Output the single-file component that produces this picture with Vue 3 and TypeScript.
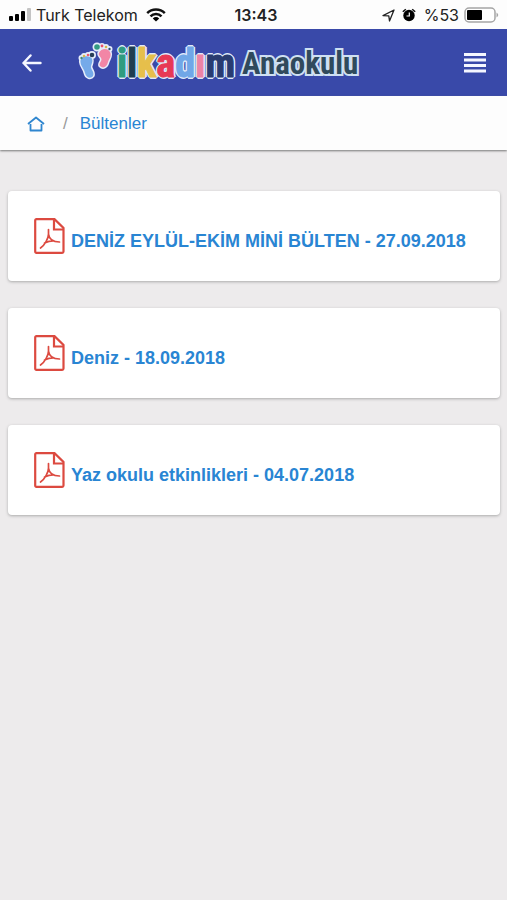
<script setup lang="ts">
interface Bulletin {
  title: string
  date: string
}

interface LogoLetter {
  char: string
  tone: string
}

const bulletins: Bulletin[] = [
  { title: 'DENİZ EYLÜL-EKİM MİNİ BÜLTEN', date: '27.09.2018' },
  { title: 'Deniz', date: '18.09.2018' },
  { title: 'Yaz okulu etkinlikleri', date: '04.07.2018' },
]

const letters: LogoLetter[] = [
  { char: 'i', tone: 'green' },
  { char: 'l', tone: 'dark' },
  { char: 'k', tone: 'yellow' },
  { char: 'a', tone: 'red' },
  { char: 'd', tone: 'sky' },
  { char: 'ı', tone: 'pink' },
  { char: 'm', tone: 'navy' },
]
</script>

<template>
  <div class="app">
    <div class="status">
      <div class="status-side">
        <svg class="signal" width="23" height="14" viewBox="0 0 23 14" aria-hidden="true">
          <rect x="0" y="8" width="4" height="5" rx="1" />
          <rect x="6" y="6" width="4" height="7" rx="1" />
          <rect x="12" y="3" width="4" height="10" rx="1" />
          <rect x="18" y="0" width="4" height="13" rx="1" fill="#c4c4c4" />
        </svg>
        <span class="carrier">Turk Telekom</span>
        <svg class="wifi" width="20" height="14" viewBox="0 0 20 14" aria-hidden="true">
          <g fill="none" stroke="#111" stroke-width="2.5">
            <path d="M1.2 5.2C6 .4 14 .4 18.800 5.200" />
            <path d="M4.500 8.400C7.500 5.300 12.500 5.300 15.500 8.400" />
          </g>
          <path d="M6.800 10.400C8.700 8.600 11.300 8.600 13.200 10.400L10 13.600Z" />
        </svg>
      </div>
      <span class="clock">13:43</span>
      <div class="status-side status-end">
        <svg width="13" height="13" viewBox="0 0 13 13" aria-hidden="true">
          <path d="M1 6.600L12 1L7.500 12L6.800 6.800Z" fill="none" stroke="#222" stroke-width="1.300" stroke-linejoin="round" />
        </svg>
        <svg class="alarm" width="14" height="14" viewBox="0 0 14 14" aria-hidden="true">
          <circle cx="7" cy="7.500" r="5.700" />
          <path d="M.8 3.800L3.800 1.200M13.200 3.800L10.200 1.200" stroke="#111" stroke-width="1.500" />
          <path d="M7.300 4.500V8H4.500" fill="none" stroke="#fff" stroke-width="1.200" />
        </svg>
        <span class="percent">%53</span>
        <svg width="35" height="16" viewBox="0 0 35 16" aria-hidden="true">
          <rect x="1" y="1" width="30" height="14" rx="4" fill="#fff" stroke="#a5a5a5" stroke-width="1.500" />
          <rect x="3" y="3" width="15" height="10" rx="1" />
          <path d="M32.500 5.500Q36 8 32.500 10.500Z" fill="#a5a5a5" />
        </svg>
      </div>
    </div>

    <header class="bar">
      <button class="icon-button" type="button" aria-label="Geri">
        <svg width="20" height="18" viewBox="0 0 20 18" fill="none" stroke="#f5f7ff" stroke-width="2.400" stroke-linecap="round" stroke-linejoin="round">
          <path d="M18.500 9H1.500M8.500 1.500L1.500 9L8.500 16.500" />
        </svg>
      </button>
      <div class="logo">
        <svg class="feet" width="35" height="38" viewBox="0 0 35 38" aria-hidden="true">
          <g stroke="#e6edfb" stroke-width="3" stroke-linejoin="round">
            <path d="M2.500 20C2 15 8 13 12 15C16 17 14 21 13 24C12 27 17 30 15 34C13 37 8 36 7 31C6 26 3 25 2.500 20Z" />
            <circle cx="14" cy="13" r="2.500" /><circle cx="10" cy="13" r="1.500" /><circle cx="6" cy="14" r="1.500" /><circle cx="3.500" cy="16" r="1.500" />
            <path d="M21 11C23 6 30 6 32 10C34 14 31 17 30 20C29 25 25 27 22 24C20 21 25 19 23 16C22 14 20 13 21 11Z" />
            <circle cx="19" cy="5" r="3" /><circle cx="24" cy="4" r="1.500" /><circle cx="28" cy="5" r="1.500" /><circle cx="31.500" cy="7" r="1.500" />
          </g>
          <path d="M2.500 20C2 15 8 13 12 15C16 17 14 21 13 24C12 27 17 30 15 34C13 37 8 36 7 31C6 26 3 25 2.500 20Z" fill="#75aae9" />
          <circle cx="14" cy="13" r="2.300" fill="#263d57" /><circle cx="10" cy="13" r="1.300" fill="#e95770" /><circle cx="6" cy="14" r="1.300" fill="#d6b84d" /><circle cx="3.500" cy="16" r="1.200" fill="#438877" />
          <path d="M21 11C23 6 30 6 32 10C34 14 31 17 30 20C29 25 25 27 22 24C20 21 25 19 23 16C22 14 20 13 21 11Z" fill="#f286a6" />
          <circle cx="19" cy="5" r="2.800" fill="#349c82" /><circle cx="24" cy="4" r="1.400" fill="#e9526b" /><circle cx="28" cy="5" r="1.300" fill="#d6b84d" /><circle cx="31.500" cy="7" r="1.200" fill="#345072" />
        </svg>
        <span class="brand"><span v-for="letter in letters" :key="letter.char" :class="letter.tone">{{ letter.char }}</span></span>
        <span class="school">Anaokulu</span>
      </div>
      <button class="icon-button" type="button" aria-label="Menü">
        <svg width="22" height="20" viewBox="0 0 22 20" fill="#f5f7ff">
          <rect width="22" height="3" y="0" /><rect width="22" height="3" y="5.500" /><rect width="22" height="3" y="11" /><rect width="22" height="3" y="16.500" />
        </svg>
      </button>
    </header>

    <nav class="crumbs">
      <a class="home" href="#" aria-label="Ana sayfa">
        <svg width="18" height="16" viewBox="0 0 18 16" fill="none" stroke="#2f86cf" stroke-width="1.800" stroke-linejoin="round">
          <path d="M1 8L9 1.500L17 8M3.500 8V14.500H14.500V8" />
        </svg>
      </a>
      <span class="slash">/</span>
      <a href="#">Bültenler</a>
    </nav>

    <main class="list">
      <a v-for="item in bulletins" :key="item.date" class="card" href="#">
        <svg class="pdf" width="31" height="36" viewBox="0 0 31 36" fill="none" stroke="#dc4a40" aria-hidden="true">
          <path d="M2.500 1.200H20.500L29.500 10V33.500Q29.500 34.800 28.200 34.800H2.500Q1.200 34.800 1.200 33.500V2.500Q1.200 1.200 2.500 1.200Z" stroke-width="2.200" />
          <path d="M20 1.500V11.500H29.500" stroke-width="2.200" />
          <path d="M14.500 11.500V16C14.500 20 11 27 6.500 30M14.500 16C15 20 18 24 25.500 24M10.500 25C14 23.500 17 22.800 20 23" stroke-width="1.700" stroke-linecap="round" />
        </svg>
        <span>{{ item.title }} - {{ item.date }}</span>
      </a>
    </main>
  </div>
</template>

<style>
body {
  margin: 0;
  background: #edebec;
}
</style>

<style scoped>
.app {
  min-height: 100vh;
  background: #edebec;
  font-family: "Liberation Sans", Arial, sans-serif;
}
.status {
  display: grid;
  grid-template-columns: 1fr auto 1fr;
  align-items: center;
  height: 29px;
  padding: 1px 8px 0 9px;
  box-sizing: border-box;
  background: #fdfdfd;
  color: #222;
  font-family: Inter, "Liberation Sans", sans-serif;
  font-size: 16px;
}
.status-side {
  display: flex;
  align-items: center;
  gap: 5px;
}
.carrier {
  margin-left: -1px;
}
.wifi {
  margin-left: 3px;
}
.status-end {
  justify-content: flex-end;
}
.alarm {
  margin: 0 3px 0 2px;
}
.clock {
  padding-left: 4px;
  font-weight: 600;
}
.bar {
  display: flex;
  align-items: center;
  height: 67px;
  padding: 0 12px;
  background: #3949a9;
}
.icon-button {
  display: flex;
  align-items: center;
  justify-content: center;
  width: 40px;
  height: 40px;
  padding: 0;
  border: 0;
  background: transparent;
}
.logo {
  display: flex;
  flex: 1;
  align-items: center;
  padding-left: 26px;
  white-space: nowrap;
}
.feet {
  margin-bottom: 4px;
}
.brand,
.school {
  padding-top: 2px;
  font-family: "Roboto Condensed", "Liberation Sans Narrow", "Open Sans Condensed", "Liberation Sans", sans-serif;
  font-weight: 700;
  line-height: 40px;
}
.brand {
  margin-left: 4px;
  font-size: 40px;
  -webkit-text-stroke: 1px currentColor;
  text-shadow: 2px 0 #dfe9fa, -2px 0 #dfe9fa, 0 2px #dfe9fa, 0 -2px #dfe9fa,
    1px 1px #dfe9fa, -1px -1px #dfe9fa, 1px -1px #dfe9fa, -1px 1px #dfe9fa;
}
.school {
  margin-left: 7px;
  font-size: 31px;
  color: #304a5c;
  paint-order: stroke fill;
  -webkit-text-stroke: 4px #cfe0f2;
}
.green { color: #309b80; }
.dark { color: #203d50; }
.yellow { color: #e6bf4b; }
.red { color: #e73955; }
.sky { color: #70a7e7; }
.pink { color: #ed83a5; }
.navy { color: #293b70; }
.crumbs {
  display: flex;
  align-items: center;
  height: 54px;
  padding: 2px 27px 0;
  box-sizing: border-box;
  background: #fdfdfd;
  box-shadow: 0 1px 2px #777;
  font-size: 17px;
}
.crumbs a,
.card {
  color: #2985d3;
  text-decoration: none;
}
.home {
  display: flex;
}
.slash {
  margin: 0 12px 0 18px;
  color: #999;
}
.list {
  display: grid;
  gap: 27px;
  padding: 41px 7px 41px 8px;
}
.card {
  display: flex;
  align-items: flex-start;
  gap: 6px;
  min-height: 90px;
  padding: 27px 16px 27px 26px;
  box-sizing: border-box;
  border-radius: 4px;
  background: #fff;
  box-shadow: 0 1px 3px #aaa;
  font-size: 18px;
  font-weight: 700;
  line-height: 20px;
}
.pdf {
  flex: none;
}
.card span {
  padding-top: 13px;
}
</style>
